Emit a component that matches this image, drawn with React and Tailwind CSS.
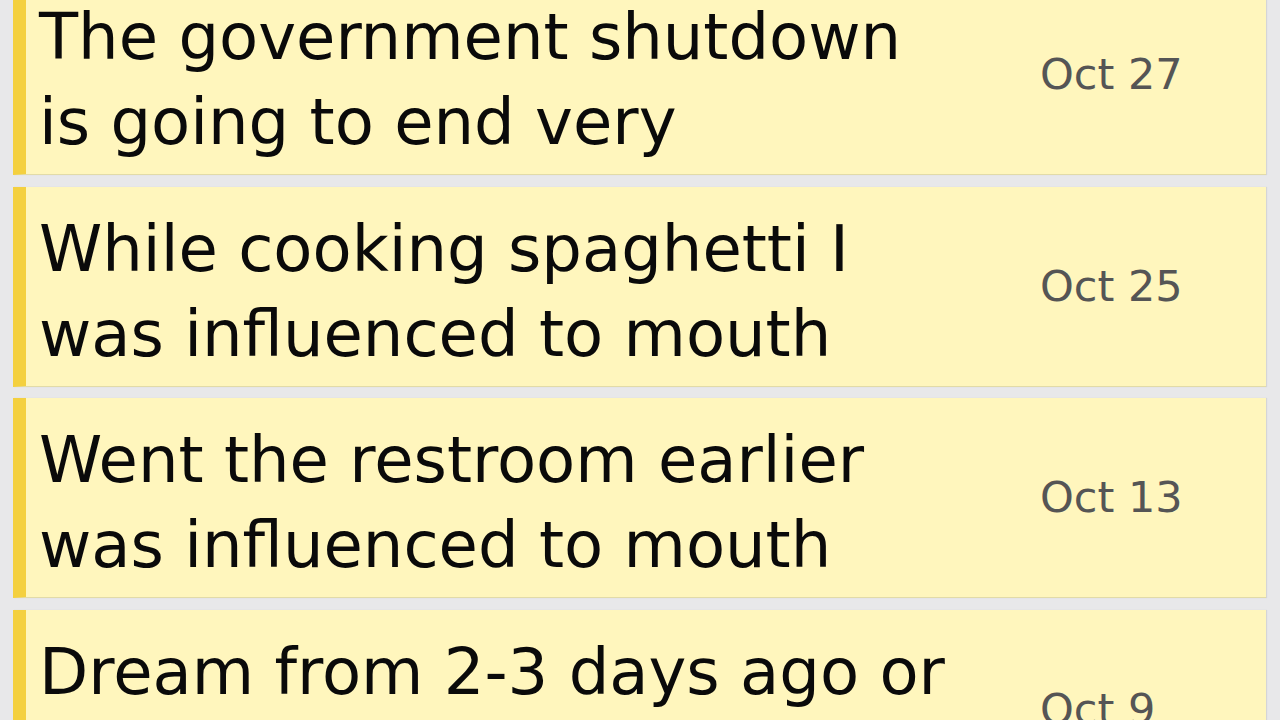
import React from "react";

const notes = [
  { l1: "The government shutdown", l2: "is going to end very", date: "Oct 27" },
  { l1: "While cooking spaghetti I", l2: "was influenced to mouth", date: "Oct 25" },
  { l1: "Went the restroom earlier", l2: "was influenced to mouth", date: "Oct 13" },
  { l1: "Dream from 2-3 days ago or", l2: "so where I was at a party", date: "Oct 9" },
];

export default function App() {
  return (
    <div
      className="w-[1280px] h-[720px] overflow-hidden bg-[#e8e8ea]"
      style={{ fontFamily: '"DejaVu Sans", sans-serif' }}
    >
      <div className="flex flex-col gap-[11.5px] pl-[13px] pr-[14px] mt-[-25px]">
        {notes.map((n, i) => (
          <div
            key={i}
            className="flex items-stretch h-[200px] bg-[#fff6bd] border-l-[13px] border-l-[#f4d03f] border-b border-b-[#e2dba8] shadow-[1px_0_1px_rgba(0,0,0,0.08)]"
          >
            <div className="flex-1 min-w-0 pl-[13px] pt-[20px] text-[64px] leading-[85px] text-[#0a0a0a] overflow-hidden">
              <div className="whitespace-nowrap">{n.l1}</div>
              <div className="whitespace-nowrap">{n.l2}</div>
            </div>
            <div className="w-[226px] flex items-center text-[43px] text-[#555]">
              {n.date}
            </div>
          </div>
        ))}
      </div>
    </div>
  );
}
